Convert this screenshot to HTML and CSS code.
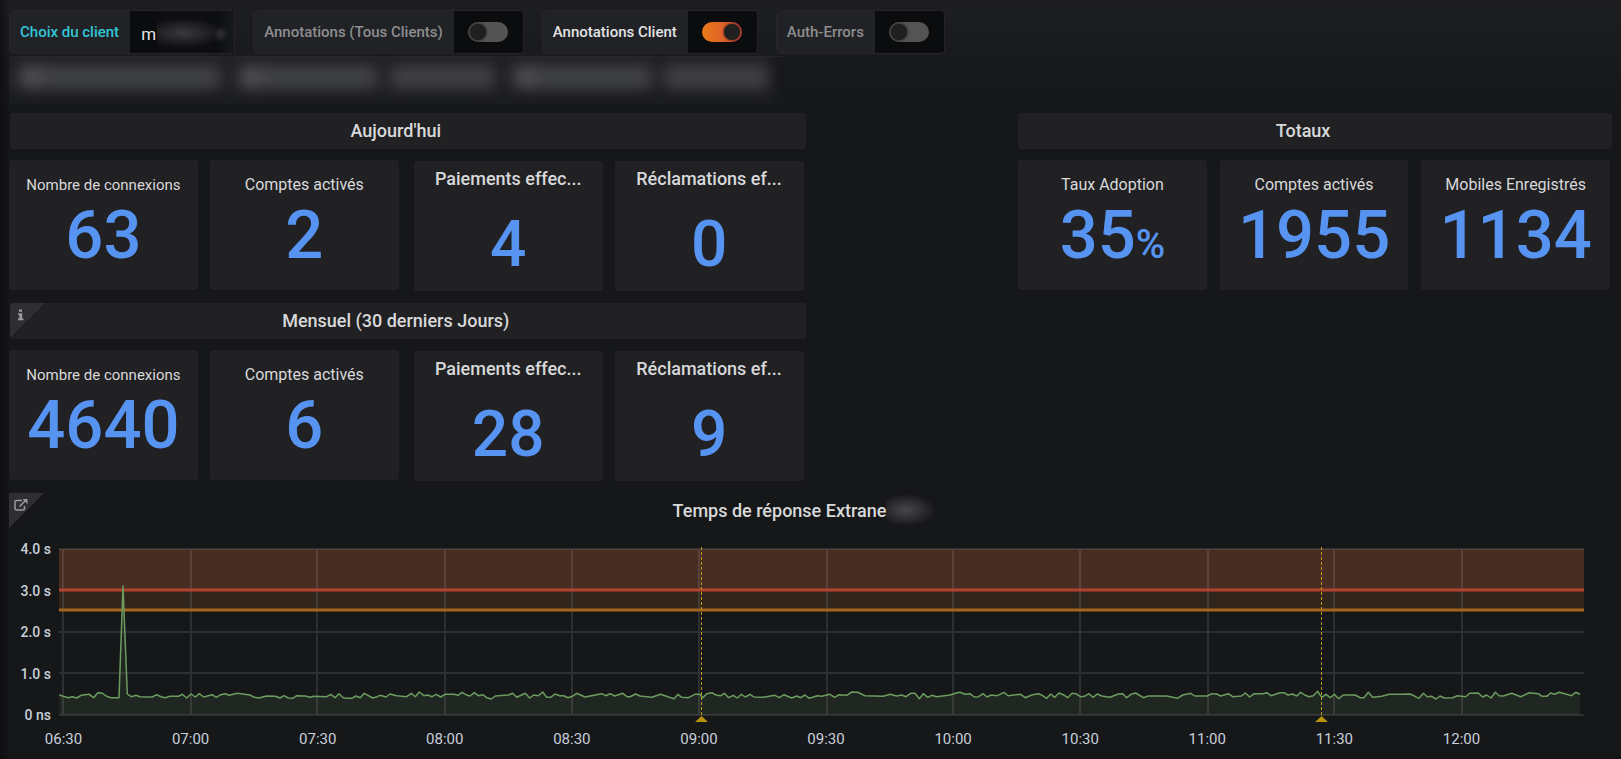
FILE: index.html
```html
<!DOCTYPE html>
<html lang="fr">
<head>
<meta charset="utf-8">
<meta name="viewport" content="width=device-width, initial-scale=1">
<title>Tableau de bord Extranet</title>
<link rel="stylesheet" href="styles.css">
</head>
<body>
<header class="controls">
  <div class="control">
    <label class="control-label control-label--variable" for="client">Choix du client</label>
    <div class="picker">
      <select class="picker-select" id="client"><option>m</option></select>
      <span class="picker-mask" aria-hidden="true"></span>
    </div>
  </div>
  <div class="control">
    <label class="control-label" for="ann-all">Annotations (Tous Clients)</label>
    <span class="control-switch"><input class="switch" type="checkbox" id="ann-all"></span>
  </div>
  <div class="control">
    <label class="control-label control-label--on" for="ann-client">Annotations Client</label>
    <span class="control-switch"><input class="switch" type="checkbox" id="ann-client" checked></span>
  </div>
  <div class="control">
    <label class="control-label" for="auth-errors">Auth-Errors</label>
    <span class="control-switch"><input class="switch" type="checkbox" id="auth-errors"></span>
  </div>
</header>

<div class="links" aria-hidden="true">
  <span class="smear smear--long"></span>
  <span class="smear smear--mid"></span><span class="smear smear--short"></span>
  <span class="smear smear--mid"></span><span class="smear smear--short"></span>
</div>

<main class="dashboard">
  <section class="group group--left">
    <h2 class="heading">Aujourd'hui</h2>
    <div class="pairs">
      <div class="pair">
        <article class="stat"><h3 class="stat-name stat-name--small">Nombre de connexions</h3><p class="stat-value">63</p></article>
        <article class="stat"><h3 class="stat-name">Comptes activés</h3><p class="stat-value">2</p></article>
      </div>
      <div class="pair pair--titled">
        <article class="stat"><h3 class="stat-title">Paiements effec...</h3><p class="stat-value">4</p></article>
        <article class="stat"><h3 class="stat-title">Réclamations ef...</h3><p class="stat-value">0</p></article>
      </div>
    </div>
  </section>

  <section class="group group--right">
    <h2 class="heading">Totaux</h2>
    <div class="triple">
      <article class="stat"><h3 class="stat-name">Taux Adoption</h3><p class="stat-value">35<span class="stat-unit">%</span></p></article>
      <article class="stat"><h3 class="stat-name">Comptes activés</h3><p class="stat-value">1955</p></article>
      <article class="stat"><h3 class="stat-name">Mobiles Enregistrés</h3><p class="stat-value">1134</p></article>
    </div>
  </section>

  <section class="group group--left">
    <h2 class="heading">
      <span class="corner">
        <svg class="corner-icon" viewBox="0 0 12 12" width="12" height="12" aria-hidden="true"><path d="M4 .5h3v2.300H4zM3 4.200h4.200v5.400h1.300v1.700H3V9.600h1.300V5.900H3z"/></svg>
      </span>
      Mensuel (30 derniers Jours)
    </h2>
    <div class="pairs">
      <div class="pair">
        <article class="stat"><h3 class="stat-name stat-name--small">Nombre de connexions</h3><p class="stat-value">4640</p></article>
        <article class="stat"><h3 class="stat-name">Comptes activés</h3><p class="stat-value">6</p></article>
      </div>
      <div class="pair pair--titled">
        <article class="stat"><h3 class="stat-title">Paiements effec...</h3><p class="stat-value">28</p></article>
        <article class="stat"><h3 class="stat-title">Réclamations ef...</h3><p class="stat-value">9</p></article>
      </div>
    </div>
  </section>

  <section class="response">
    <span class="corner">
      <svg class="corner-icon" viewBox="0 0 14 12" width="14" height="12" aria-hidden="true"><path class="outline" d="M8 1.500H2.500a1.500 1.500 0 0 0-1.500 1.500v6.500A1.500 1.500 0 0 0 2.500 11h6.500a1.500 1.500 0 0 0 1.500-1.500V7M5.500 7.500l5.500-5.500"/><path d="M8.500 0H13.500v5z"/></svg>
    </span>
    <h2 class="response-title">Temps de réponse Extrane<span class="title-mask" aria-hidden="true"></span></h2>
    <div class="chart">
      <div class="y-axis"><span>4.0 s</span><span>3.0 s</span><span>2.0 s</span><span>1.0 s</span><span>0 ns</span></div>
      <svg class="plot" viewBox="59 546 1525 178" preserveAspectRatio="none" role="img" aria-label="Temps de réponse">
        <path class="series-fill" id="series-fill"/>
        <rect class="zone-warn" x="59" y="590" width="1525" height="20"/>
        <rect class="zone-crit" x="59" y="549" width="1525" height="41"/>
        <path class="grid-line" d="M59 549H1584M59 632H1584M59 673H1584M59 715H1584M63 549V715M191 549V715M317 549V715M445 549V715M572 549V715M699 549V715M827 549V715M953 549V715M1080 549V715M1208 549V715M1334 549V715M1462 549V715"/>
        <path class="limit-warn-edge" d="M59 610H1584"/><path class="limit-warn" d="M59 610H1584"/>
        <path class="limit-crit-edge" d="M59 590H1584"/><path class="limit-crit" d="M59 590H1584"/>
        <path class="series-line" id="series-line"/>
        <path class="event-line" d="M701.500 547V716M1321.500 547V716"/>
        <path class="event-mark" d="M695 722l6.500-6 6.500 6zM1315 722l6.500-6 6.500 6z"/>
      </svg>
      <div class="x-axis"><span>06:30</span><span>07:00</span><span>07:30</span><span>08:00</span><span>08:30</span><span>09:00</span><span>09:30</span><span>10:00</span><span>10:30</span><span>11:00</span><span>11:30</span><span>12:00</span></div>
    </div>
  </section>
</main>
<script src="chart.js"></script>
</body>
</html>
```

FILE: styles.css
```css
* { box-sizing: border-box; }

body {
  margin: 0;
  min-height: 100vh;
  padding: 10px 9px 0;
  background: linear-gradient(#1d1e20, #161719 100px);
  box-shadow: inset 7px 0 8px -5px #0b0c0e;
  color: #d8d9da;
  font-family: Roboto, "Liberation Sans", sans-serif;
  font-size: 15px;
}

h2, h3, p { margin: 0; font-weight: 500; }

.controls { display: flex; flex-wrap: wrap; gap: 18px; }

.control {
  display: flex;
  height: 44px;
  border: 1px solid #262628;
  border-radius: 4px;
  background: #0b0c0e;
  overflow: hidden;
}

.control-label {
  display: flex;
  align-items: center;
  padding: 0 11px 0 10px;
  background: #202226;
  color: #8e8e8e;
  font-size: 15px;
  font-weight: 500;
  white-space: nowrap;
}
.control-label--variable { color: #33c5d6; }
.control-label--on { color: #e3e3e3; }

.control-switch { display: flex; align-items: center; padding: 0 15px 0 14px; }

.switch {
  appearance: none;
  display: flex;
  align-items: center;
  width: 40px;
  height: 20px;
  margin: 0;
  padding: 0 2px;
  border-radius: 10px;
  background: #545454;
}
.switch::before {
  content: "";
  width: 16px;
  height: 16px;
  border-radius: 50%;
  background: #202020;
  box-shadow: 0 0 3px #0b0c0e;
}
.switch:checked { justify-content: flex-end; background: linear-gradient(90deg, #eb7b18, #d44a3a); }

.picker { position: relative; display: flex; width: 104px; }
.picker-select {
  appearance: none;
  width: 100%;
  padding: 3px 11px 0;
  border: 0;
  background: #0b0c0e;
  color: #e3e3e3;
  font: 17px Roboto, "Liberation Sans", sans-serif;
}
.picker-mask {
  position: absolute;
  inset: 0 -4px 0 27px;
  background:
    radial-gradient(ellipse 8px 8px at 64px 23px, #303133, transparent),
    radial-gradient(ellipse 42px 15px at 26px 22px, #3a3a3c, transparent),
    linear-gradient(90deg, #0d0e10 60px, #18191b 78px);
}

.links {
  display: flex;
  align-items: center;
  gap: 20px;
  width: 775px;
  max-width: 100%;
  height: 48px;
  margin-top: 2px;
  padding: 0 16px 8px 11px;
  border-top: 1px solid #262628;
  border-radius: 4px 0 0 0;
  background: linear-gradient(90deg, transparent 755px, #17181a 772px), linear-gradient(#212226 60%, #1a1b1d);
}
.smear {
  height: 22px;
  border-radius: 8px;
  background: linear-gradient(90deg, #54555a, #414245 30px);
  filter: blur(7px);
}
.smear--long { flex: 200; }
.smear--mid { flex: 138; }
.smear--short { flex: 104; margin-left: -8px; background: #404143; }

.dashboard {
  display: grid;
  grid-template-columns: repeat(24, minmax(0, 1fr));
  column-gap: 10px;
  row-gap: 13px;
  margin-top: 9px;
}
.group--left { grid-column: 1 / span 12; }
.group--right { grid-column: 16 / span 9; }

.heading {
  position: relative;
  display: flex;
  align-items: center;
  justify-content: center;
  height: 36px;
  margin-left: 1px;
  padding: 0 24px 2px 0;
  border-radius: 3px;
  background: #212124;
  font-size: 18px;
  overflow: hidden;
}

.pairs { display: grid; grid-template-columns: 1fr 1fr; gap: 15px; padding: 11px 2px 0 0; }
.pair { display: grid; grid-template-columns: 1fr 1fr; gap: 12px; }
.pair--titled { margin: 1px 0 -1px; }
.triple { display: grid; grid-template-columns: repeat(3, 1fr); gap: 13px; padding: 11px 2px 0 1px; }

.stat {
  display: flex;
  flex-direction: column;
  align-items: center;
  min-width: 0;
  height: 130px;
  border-radius: 3px;
  background: #212124;
}
.stat-name { margin-top: 15px; font-size: 16px; font-weight: 400; line-height: 20px; }
.stat-name--small { font-size: 15px; }
.stat-value { color: #5794f2; font-size: 67px; line-height: 80px; }
.stat-unit { font-size: 40px; }

.stat-title {
  padding-top: 8px;
  font-size: 18px;
  line-height: 20px;
  white-space: nowrap;
}
.pair--titled .stat-value { margin-top: 16px; font-size: 64px; }

.corner {
  position: absolute;
  top: 0;
  left: 0;
  width: 35px;
  height: 35px;
  background: #2f2f33;
  clip-path: polygon(0 0, 100% 0, 0 100%);
}
.corner-icon { display: block; margin: 6px 0 0 5px; fill: #9a9b9d; }
.outline { fill: none; stroke: #9a9b9d; stroke-width: 1.500; }

.response { position: relative; grid-column: 1 / -1; }
.response-title {
  display: flex;
  align-items: center;
  justify-content: center;
  height: 36px;
  padding: 0 14px 2px 0;
  font-size: 18px;
}
.title-mask {
  width: 48px;
  height: 32px;
  background: radial-gradient(ellipse 30px 16px at 20px 16px, #48484a, transparent);
}

.chart {
  display: grid;
  grid-template-columns: 42px 1fr;
  column-gap: 8px;
  margin: 17px 28px 0 0;
  color: #c7d0d9;
}
.y-axis {
  display: flex;
  flex-direction: column;
  justify-content: space-between;
  height: 184px;
  margin-top: -6px;
  font-weight: 500;
  font-size: 14px;
  line-height: 18px;
  text-align: right;
}
.plot { width: 100%; height: 178px; }
.x-axis {
  grid-column: 2;
  display: grid;
  grid-template-columns: repeat(12, 1fr);
  margin: 6px 59px 0 -59px;
  line-height: 18px;
  text-align: center;
}

.zone-warn { fill: #32251b; }
.zone-crit { fill: #482e22; }
.series-fill { fill: #7eb26d; fill-opacity: .1; }
.series-line { fill: none; stroke: #6d9c5f; stroke-width: 1.500; stroke-linejoin: round; }
.grid-line { fill: none; stroke: #c8c8c8; stroke-opacity: .14; stroke-width: 2; }
.limit-warn, .limit-crit { stroke-width: 2; }
.limit-warn-edge, .limit-crit-edge { stroke-width: 4; stroke-opacity: .5; }
.limit-warn, .limit-warn-edge { stroke: #a3661b; }
.limit-crit, .limit-crit-edge { stroke: #b2432e; }
.event-line { fill: none; stroke: #c09a10; stroke-width: 1; stroke-dasharray: 3 2; }
.event-mark { fill: #b8930b; }
```

FILE: chart.js
```js
// Each block: origin x, origin y, then x,y samples in thirds of a unit.
const blocks = [
  [0, 480, "178,645 190,649 205,653 217,650 230,654 243,646 268,643 281,653 293,638 306,639 318,648 332,653 357,653 369,318 382,642 394,650 408,646 420,650 457,651 470,644 483,650 495,653 510,649 535,649 547,643 560,654 573,642 586,651 598,641 611,651 636,644 649,652 662,644 675,641 688,646 712,640 750,645 763,652 776,654 800,648 827,649 840,654 852,647 865,654 878,655 890,647 916,648 929,652 941,649 980,650 992,643 1005,653 1017,641 1030,653 1042,655 1055,655 1068,648 1081,653 1093,640 1118,654 1132,650"],
  [380, 670, "0,76 18,81 30,72 50,77 80,80 94,70 106,80 118,66 132,77 143,75 156,80 169,73 182,81 195,73 222,73 234,76 246,67 258,74 270,78 283,68 295,77 308,74 320,83 334,87 346,78 385,75 398,70 410,82 436,70 449,84 461,75 475,77 488,66 500,82 512,82 525,72 539,77 551,77 564,83 577,79 590,70 615,81 665,71 677,77 690,71 704,78 728,70 741,80"],
  [600, 480, "90,650 107,642 120,648 155,652 182,643 208,652 222,656 234,643 245,652 265,653 285,643 300,643 308,653 320,641 335,638 348,645 362,647 373,640 386,653 400,646 412,654 424,643 436,651 450,643 462,651 490,652 525,646 538,653 552,644 575,654 590,648 602,653 615,645 628,655 652,647 665,649 690,643 704,652 717,644 740,646 755,636 773,637 795,647 850,649 870,643 890,648 905,645 918,650 932,640 945,640 958,656 970,641 983,652 995,646 1010,650 1050,645 1072,638"],
  [960, 670, "0,67 15,73 30,71 43,81 56,80 69,71 81,81 94,75 112,77 132,67 144,77 182,73 196,83 215,75 235,71 247,76 260,85 272,72 284,82 297,69 310,74 323,83 336,70 348,71 361,80 373,79 387,71 399,82 412,72 425,78 450,82 475,72 488,71 500,83 513,73 527,69 550,83 565,78 620,78 652,85 668,75 692,70 704,78"],
  [1200, 530, "0,498 22,498 35,491 50,492 62,498 85,491 98,500 124,498 136,489 149,501 162,491 188,491 200,488 213,497 240,488 252,488 264,495 277,492 290,498 302,487 314,495 327,500 340,497 353,484 365,502 378,493 391,503 403,493 416,506 430,495 466,495 480,503 492,503 505,487 518,502 545,499 568,493 605,493 630,492 645,499 657,505 670,490 682,500 695,499 708,507 720,498 733,504 758,503 772,497 797,500 809,490 835,489 848,501 860,495 873,504 886,487 898,497 910,498 935,490 962,500 988,488 1015,491 1026,499 1040,499 1052,489 1064,493 1077,487 1100,493 1114,497 1127,487 1140,493"]
];

const points = blocks.flatMap(([x0, y0, samples]) =>
  samples.split(" ").map((pair) => {
    const [x, y] = pair.split(",").map(Number);
    return `${(x0 + x / 3).toFixed(1)} ${(y0 + y / 3).toFixed(1)}`;
  })
);
const line = "M" + points.join("L");
document.getElementById("series-line").setAttribute("d", line);
document.getElementById("series-fill").setAttribute("d", line + "L1580 715L59 715Z");
```
